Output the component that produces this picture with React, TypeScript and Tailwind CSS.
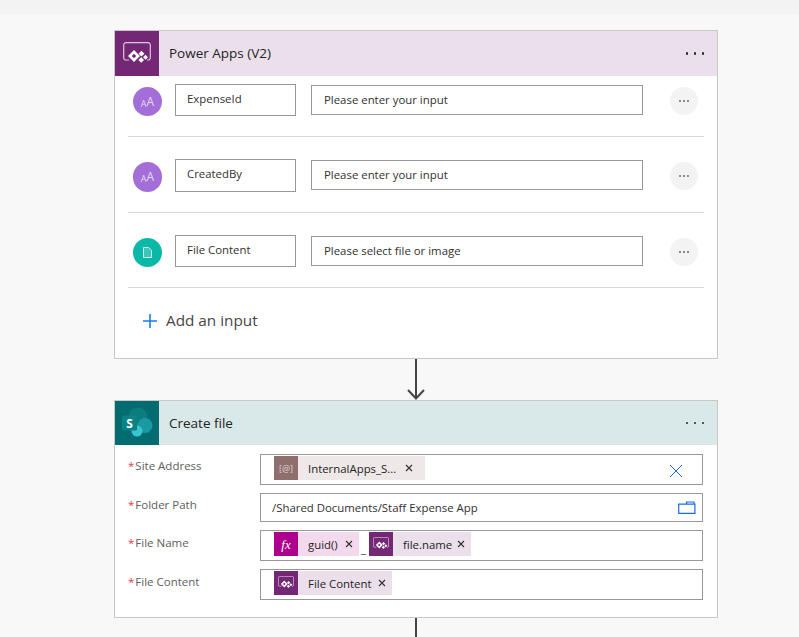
import type { ReactNode } from "react";

const font = { fontFamily: '"Open Sans", "Noto Sans", sans-serif' };

function PowerAppsIcon({ size, hole, className }: { size: number; hole: string; className?: string }) {
  return (
    <svg width={size} height={(size * 24) / 28} viewBox="0 0 28 24" fill="none" className={className}>
      <path
        d="M6 18H3A2.3 2.3 0 0 1 .7 15.7V3A2.3 2.3 0 0 1 3 .7H25A2.3 2.3 0 0 1 27.3 3V15.7A2.3 2.3 0 0 1 25 18H24"
        stroke="white"
        strokeOpacity="0.75"
        strokeWidth="1.2"
      />
      <path d="M11 8 17 14 11 20 5 14Z" fill="white" />
      <path d="M11 11.8 13.2 14 11 16.2 8.8 14Z" fill={hole} />
      <path d="M18.5 8.8 21.4 11.7 18.5 14.6 15.6 11.7Z" fill="white" />
      <path d="M22.5 12.8 25 15.3 22.5 17.8 20 15.3Z" fill="white" />
      <path d="M18.2 15.2 21 18 18.2 20.8 15.4 18Z" fill="white" />
    </svg>
  );
}

function SharePointIcon() {
  return (
    <svg width="44" height="44" viewBox="0 0 44 44">
      <circle cx="23" cy="16" r="9.5" fill="#0b7c80" />
      <circle cx="30" cy="24.5" r="7.5" fill="#1a9ba1" />
      <circle cx="22" cy="30" r="5.5" fill="#37c6d0" />
      <rect x="7" y="14.5" width="15" height="15" rx="1.5" fill="#0a8286" />
      <text x="14.5" y="26.5" textAnchor="middle" fontSize="12" fontWeight="700" fill="white" style={font}>
        S
      </text>
    </svg>
  );
}

function HeaderDots() {
  return (
    <div className="flex gap-[5.5px]">
      <span className="h-[2.5px] w-[2.5px] rounded-full bg-[#1f2a3a]" />
      <span className="h-[2.5px] w-[2.5px] rounded-full bg-[#1f2a3a]" />
      <span className="h-[2.5px] w-[2.5px] rounded-full bg-[#1f2a3a]" />
    </div>
  );
}

function CardHeader({
  title,
  bg,
  iconBg,
  height,
  icon,
}: {
  title: string;
  bg: string;
  iconBg: string;
  height: string;
  icon: ReactNode;
}) {
  return (
    <div className={`flex items-stretch ${bg} ${height}`}>
      <div className={`flex w-[44px] items-center justify-center ${iconBg}`}>{icon}</div>
      <div className="ml-[10px] flex-1 self-center pb-[1px] text-[13.5px] leading-[18px] text-[#252423]">{title}</div>
      <div className="mr-[13px] self-center">
        <HeaderDots />
      </div>
    </div>
  );
}

function InputRow({
  name,
  placeholder,
  circle,
  rowClass,
  nameHeight,
  children,
}: {
  name: string;
  placeholder: string;
  circle: string;
  rowClass: string;
  nameHeight: string;
  children: ReactNode;
}) {
  return (
    <div className={`mx-[13px] flex items-start border-b border-[#d8d8d8] pl-[5px] ${rowClass}`}>
      <div className={`mt-[3px] flex shrink-0 items-center justify-center rounded-full ${circle}`}>{children}</div>
      <div
        className={`ml-[13px] shrink-0 border border-[#989898] bg-white pl-[11px] text-[11.4px] leading-[28px] text-[#323130] ${nameHeight}`}
      >
        {name}
      </div>
      <div className="ml-[15px] mt-[1px] h-[30px] w-[332px] shrink-0 border border-[#989898] bg-white pl-[12px] text-[11.4px] leading-[28px] text-[#323130]">
        {placeholder}
      </div>
      <div className="ml-[27px] mt-[3px] flex h-[28px] w-[28px] shrink-0 items-center justify-center gap-[1px] rounded-full bg-[#f3f3f3]">
        <span className="h-[2px] w-[2px] bg-[#8a8a8a]" />
        <span className="mx-[1px] h-[2px] w-[2px] bg-[#8a8a8a]" />
        <span className="h-[2px] w-[2px] bg-[#8a8a8a]" />
      </div>
    </div>
  );
}

function TextGlyph() {
  return (
    <span className="flex items-end leading-none text-white/75">
      <span className="text-[9px]">A</span>
      <span className="text-[12px]">A</span>
    </span>
  );
}

function Token({
  label,
  icon,
  iconBg,
  bg,
  width,
  closeGap = "mr-[6px]",
}: {
  label: string;
  icon: ReactNode;
  iconBg: string;
  bg: string;
  width: string;
  closeGap?: string;
}) {
  return (
    <div className={`mt-[1px] flex h-[24px] items-center self-start ${bg} ${width}`}>
      <div className={`flex h-[24px] w-[24px] shrink-0 items-center justify-center ${iconBg}`}>{icon}</div>
      <span className="ml-[10px] flex-1 pt-[1px] text-[11.4px] text-[#252423]">{label}</span>
      <svg width="8" height="8" viewBox="0 0 8 8" className={closeGap}>
        <path d="M1 1 7 7M7 1 1 7" stroke="#323130" strokeWidth="1.1" />
      </svg>
    </div>
  );
}

function Field({
  label,
  height,
  labelPad = "pt-[4px]",
  children,
}: {
  label: string;
  height: string;
  labelPad?: string;
  children: ReactNode;
}) {
  return (
    <div className="mx-[13px] flex">
      <div className={`w-[132px] shrink-0 text-[11.5px] leading-[16px] text-[#605e5c] ${labelPad}`}>
        <span className="mr-[1px] text-[#e8384f]">*</span>
        {label}
      </div>
      <div className={`flex w-[443px] items-center border border-[#989898] bg-white pl-[13px] ${height}`}>
        {children}
      </div>
    </div>
  );
}

export default function App() {
  const paIcon = <PowerAppsIcon size={16} hole="#742774" />;

  return (
    <div className="h-[637px] w-[799px] overflow-hidden bg-[#f8f8f8]" style={font}>
      <div className="h-[14px] bg-[#f3f3f3]" />
      <div className="pl-[114px] pt-[16px]">
        <div className="w-[604px] border border-[#c8c8c8] bg-white">
          <CardHeader
            title="Power Apps (V2)"
            bg="bg-[#ebdfeb]"
            iconBg="bg-[#742774]"
            height="h-[45px]"
            icon={<PowerAppsIcon size={28} hole="#742774" />}
          />
          <InputRow
            name="ExpenseId"
            placeholder="Please enter your input"
            circle="h-[29px] w-[29px] bg-[#a36ed8]"
            rowClass="h-[61px] pt-[8px]"
            nameHeight="h-[32px] w-[121px]"
          >
            <TextGlyph />
          </InputRow>
          <InputRow
            name="CreatedBy"
            placeholder="Please enter your input"
            circle="h-[30px] w-[29px] bg-[#a36ed8]"
            rowClass="h-[76px] pt-[22px]"
            nameHeight="h-[33px] w-[121px]"
          >
            <TextGlyph />
          </InputRow>
          <InputRow
            name="File Content"
            placeholder="Please select file or image"
            circle="h-[29px] w-[29px] bg-[#0ab8a8]"
            rowClass="h-[75px] pt-[22px]"
            nameHeight="h-[32px] w-[121px]"
          >
            <svg width="9" height="11" viewBox="0 0 9 11" fill="none">
              <path d="M.5.5H5.7L8.5 3.3V10.5H.5Z" fill="white" fillOpacity="0.2" stroke="white" strokeOpacity="0.75" />
            </svg>
          </InputRow>
          <div className="flex h-[70px] items-center pb-[5px] pl-[28px]">
            <svg width="14" height="14" viewBox="0 0 14 14">
              <path d="M7 0V14M0 7H14" stroke="#1a7af0" strokeWidth="1.6" />
            </svg>
            <span className="ml-[9px] text-[15.3px] text-[#484644]">Add an input</span>
          </div>
        </div>

        <svg width="604" height="41" viewBox="0 0 604 41" className="block">
          <path d="M302 0V39M294 31 302 39.5 310 31" fill="none" stroke="#444" strokeWidth="2" />
        </svg>

        <div className="w-[604px] border border-[#c8c8c8] bg-white pb-[17px]">
          <CardHeader
            title="Create file"
            bg="bg-[#d9e8e8]"
            iconBg="bg-[#036c70]"
            height="h-[44px]"
            icon={<SharePointIcon />}
          />
          <div className="flex flex-col gap-[8px] pt-[9px]">
            <Field label="Site Address" height="h-[31px]">
              <Token
                label="InternalApps_S..."
                bg="bg-[#eee8e8]"
                iconBg="bg-[#8f6e6e]"
                width="w-[151px]"
                closeGap="mr-[12px]"
                icon={<span className="text-[9px] leading-none text-white/70">[@]</span>}
              />
              <svg width="14" height="14" viewBox="0 0 14 14" className="ml-[244px] mt-[3px]">
                <path d="M1 1 13 13M13 1 1 13" stroke="#2563eb" strokeWidth="1" />
              </svg>
            </Field>
            <Field label="Folder Path" height="h-[29px]">
              <span className="-ml-[2px] flex-1 text-[11.4px] text-[#323130]">/Shared Documents/Staff Expense App</span>
              <svg width="18" height="13" viewBox="0 0 18 13" fill="none" className="mr-[6px]">
                <path d="M.7 3.2H16.9V12.3H.7ZM8.5 3V1H16V3" stroke="#1a6be0" strokeWidth="1.2" />
              </svg>
            </Field>
            <Field label="File Name" height="h-[31px]" labelPad="pt-[5px]">
              <Token
                label="guid()"
                bg="bg-[#f3d9ed]"
                iconBg="bg-[#ad008c]"
                width="w-[85px]"
                icon={<span className="font-['Liberation_Serif'] text-[13px] italic leading-none text-white">fx</span>}
              />
              <span className="ml-[2px] mr-[3px] mt-[6px] text-[11.4px] leading-none text-[#323130]">_</span>
              <Token
                label="file.name"
                bg="bg-[#ebdfeb]"
                iconBg="bg-[#742774]"
                width="w-[102px]"
                icon={paIcon}
              />
            </Field>
            <Field label="File Content" height="h-[31px]" labelPad="pt-[5px]">
              <Token
                label="File Content"
                bg="bg-[#ebdfeb]"
                iconBg="bg-[#742774]"
                width="w-[118px]"
                icon={paIcon}
              />
            </Field>
          </div>
        </div>

        <div className="ml-[301px] h-[19px] w-[2px] bg-[#444]" />
      </div>
    </div>
  );
}
